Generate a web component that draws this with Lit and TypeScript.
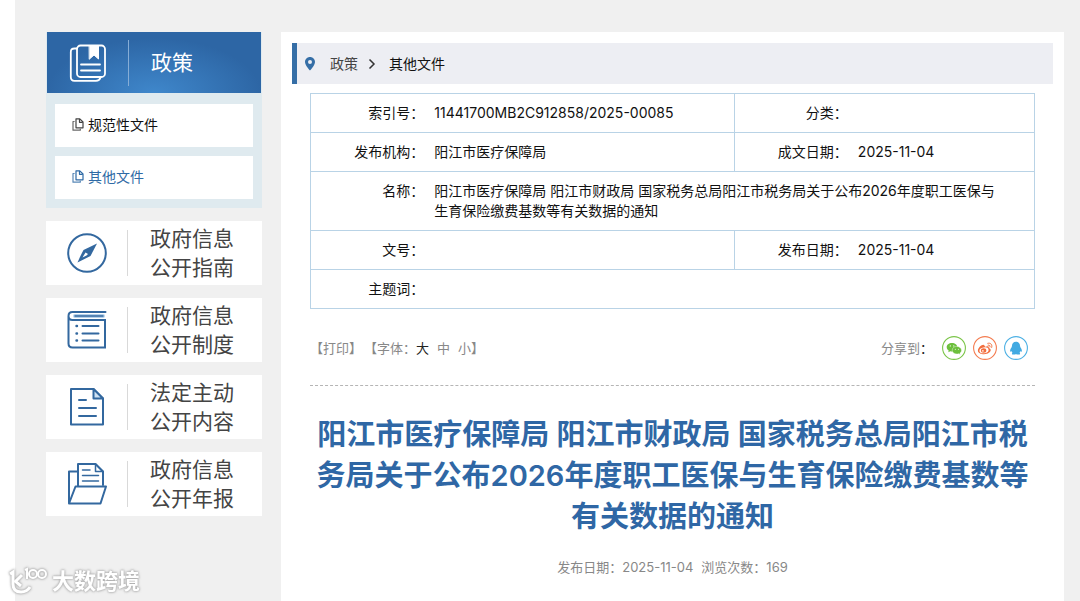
import { LitElement, html, css, svg } from "lit";
import { customElement, state } from "lit/decorators.js";

const policyIcon = svg`
  <svg viewBox="0 0 38 38" width="38" height="38" fill="none" stroke="#fff" stroke-width="1.8" stroke-linecap="round" stroke-linejoin="round" aria-hidden="true">
    <rect x="8" y="1.5" width="28" height="31.5" rx="3.5"/>
    <path d="M8 4.5H5.5Q1.800 4.500 1.800 8V33Q1.800 36.800 5.500 36.800H27Q30.500 36.800 31.500 33.500"/>
    <path d="M20.500 1.500H29.500V15L25 11L20.500 15Z" fill="#fff" stroke-width="1"/>
    <path d="M12 20.500H31M12 26.500H31"/>
  </svg>`;

const compassIcon = svg`
  <svg viewBox="0 0 40 40" width="40" height="40" fill="none" stroke="#33689f" aria-hidden="true">
    <circle cx="20" cy="20" r="18.800" stroke-width="2"/>
    <path d="M30 10.500L16.500 17Q13.500 22.500 10.500 29.500L23.500 23Z" fill="#33689f" stroke="none"/>
    <path d="M18.500 19.500L21 21L19.500 22.500L15.500 24.500Z" fill="#fff" stroke="none"/>
  </svg>`;

const bookIcon = svg`
  <svg viewBox="0 0 40 40" width="40" height="40" fill="none" stroke="#33689f" stroke-width="2" stroke-linecap="round" aria-hidden="true">
    <path d="M38.500 2H5.500Q1.500 2 1.500 6V33.500Q1.500 37.500 5.500 37.500H38V10H5.500Q1.500 10 1.500 6" />
    <path d="M8 6H36" stroke-width="4" stroke="#b5d2ec"/>
    <path d="M8 6H36" stroke-width="1.500"/>
    <path d="M15.500 16H31.500M15.500 23.500H31.500M15.500 30.500H31.500" stroke-width="2"/>
    <path d="M9.500 16H10M9.500 23.500H10M9.500 30.500H10" stroke-width="2.400"/>
  </svg>`;

const sheetIcon = svg`
  <svg viewBox="0 0 40 40" width="40" height="40" fill="none" stroke="#33689f" stroke-width="2" stroke-linejoin="round" stroke-linecap="round" aria-hidden="true">
    <path d="M4 2H26.500L36 11.500V37.500H4Z"/>
    <path d="M26.500 2V11.500H36Z" fill="#cfe2f3"/>
    <path d="M12 13H19M12 21H29M12 29H29"/>
  </svg>`;

const folderIcon = svg`
  <svg viewBox="0 0 40 44" width="40" height="44" fill="none" stroke="#33689f" stroke-width="2" stroke-linejoin="round" stroke-linecap="round" aria-hidden="true">
    <path d="M10.500 9.500H2V40.500"/>
    <path d="M11 24V2H28.500L36 9.500V23"/>
    <path d="M28.500 2V9.500H36Z" stroke-width="1.500"/>
    <path d="M15.500 8H23M15.500 13.500H31.500M15.500 19H31.500" stroke-width="1.500"/>
    <path d="M8.500 24.500H39L33.500 41.500H2Z" fill="#fff"/>
  </svg>`;

const copyIcon = svg`
  <svg class="copy" viewBox="0 0 12 13" width="12" height="13" fill="none" stroke="currentColor" stroke-width="1.200" stroke-linejoin="round" aria-hidden="true">
    <path d="M4 .8H7.800L11 4V9.800H4Z"/>
    <path d="M7.500 1V4.300H10.800"/>
    <path d="M2.600 3.500H1V12.200H8.300V10.800" opacity=".8"/>
  </svg>`;

const pinIcon = svg`
  <svg viewBox="0 0 10 14" width="10" height="14" fill="#356ea6" fill-rule="evenodd" aria-hidden="true">
    <path d="M5 0C2.200 0 0 2.200 0 5C0 8.500 5 13.600 5 13.600S10 8.500 10 5C10 2.200 7.800 0 5 0ZM5 3A2 2 0 1 1 5 7A2 2 0 1 1 5 3Z"/>
  </svg>`;

const chevronIcon = svg`
  <svg viewBox="0 0 8 12" width="8" height="12" fill="none" stroke="#333" stroke-width="1.500" aria-hidden="true">
    <path d="M1.500 1.500L6 6L1.500 10.500"/>
  </svg>`;

const wechatIcon = svg`
  <svg viewBox="0 0 24 24" width="24" height="24" aria-hidden="true">
    <circle cx="12" cy="12" r="11.400" fill="#fff" stroke="#7bc549" stroke-width="1.100"/>
    <path d="M10 7C6.800 7 4.700 8.900 4.700 11.200C4.700 12.600 5.500 13.700 6.700 14.500L6.300 16.200L8.300 15.200Q9.200 15.500 10.200 15.500C13 15.500 15.300 13.700 15.300 11.200C15.300 8.900 13 7 10 7Z" fill="#6cbf3c"/>
    <path d="M14.800 10.400C12 10.400 10.200 12.200 10.200 14.200C10.200 16.400 12.200 18 14.900 18Q15.800 18 16.600 17.700L18.300 18.600L17.900 17.100C19 16.400 19.500 15.400 19.500 14.200C19.500 12.200 17.500 10.400 14.800 10.400Z" fill="#6cbf3c" stroke="#fff" stroke-width=".4"/>
    <g fill="#fff"><circle cx="8.300" cy="9.900" r=".6"/><circle cx="11.800" cy="9.900" r=".6"/><circle cx="13.300" cy="13.200" r=".5"/><circle cx="16.400" cy="13.200" r=".5"/></g>
  </svg>`;

const weiboIcon = svg`
  <svg viewBox="0 0 24 24" width="24" height="24" fill="none" aria-hidden="true">
    <circle cx="12" cy="12" r="11.400" fill="#fff" stroke="#f47c50" stroke-width="1.100"/>
    <path d="M10.700 8.900C9.800 7.800 4.900 11.400 4.900 14.400C4.900 16.900 8 18.200 11 18.200C15 18.200 17.700 16 17.700 14C17.700 12.700 16.700 12.100 15.800 11.900C16.300 10.300 14.800 9.600 12 10.700C12.200 9.900 11.300 9 10.700 8.900Z" fill="#f26d3d"/>
    <ellipse cx="11" cy="14.300" rx="4.600" ry="2.900" transform="rotate(-8 11 14.300)" fill="#fff"/>
    <ellipse cx="10.600" cy="14.500" rx="2.700" ry="2.200" fill="#f26d3d"/>
    <circle cx="9.900" cy="14.900" r=".8" fill="#fff"/>
    <path d="M14.800 7.300C17.800 6.500 19.500 8.700 18.700 11.400M15.100 9.100C16.700 8.800 17.300 9.800 17 11" stroke="#f26d3d" stroke-width="1" stroke-linecap="round"/>
  </svg>`;

const qqIcon = svg`
  <svg viewBox="0 0 24 24" width="24" height="24" aria-hidden="true">
    <circle cx="12" cy="12" r="11.400" fill="#fff" stroke="#4cb0e4" stroke-width="1.100"/>
    <path d="M12 5.700C9.400 5.700 8 7.500 8 9.800C8 10.300 7.700 10.700 7.600 11.200C6.500 12.700 5.900 14.200 6.200 15.500C6.400 16 7 15.500 7.400 14.900C7.600 15.700 8 16.300 8.500 16.700C7.700 17.100 7.500 18.500 9.200 18.600C10.600 18.700 11.600 18.300 12 17.900C12.400 18.300 13.400 18.700 14.800 18.600C16.500 18.500 16.300 17.100 15.500 16.700C16 16.300 16.400 15.700 16.600 14.900C17 15.500 17.600 16 17.800 15.500C18.100 14.200 17.500 12.700 16.400 11.200C16.300 10.700 16 10.300 16 9.800C16 7.500 14.600 5.700 12 5.700Z" fill="#41aae2"/>
  </svg>`;

const sections = [
  { icon: compassIcon, lines: ["政府信息", "公开指南"] },
  { icon: bookIcon, lines: ["政府信息", "公开制度"] },
  { icon: sheetIcon, lines: ["法定主动", "公开内容"] },
  { icon: folderIcon, lines: ["政府信息", "公开年报"] },
];

const title =
  "阳江市医疗保障局 阳江市财政局 国家税务总局阳江市税务局关于公布2026年度职工医保与生育保险缴费基数等有关数据的通知";

@customElement("side-nav")
class SideNav extends LitElement {
  static styles = css`
    :host { display: flex; flex-direction: column; gap: 13px; }
    a { color: inherit; text-decoration: none; }
    .group { background: #dfeaef; padding: 0 1px 9px; }
    .row {
      display: grid;
      grid-template-columns: 82px 1fr;
      align-items: center;
      font-size: 21px;
      line-height: 29px;
    }
    .icon {
      display: flex;
      align-items: center;
      justify-content: center;
      height: 46px;
      border-right: 1px solid #d9d9d9;
    }
    .label { padding-left: 22px; }
    .line { display: block; }
    .head {
      height: 61px;
      color: #fff;
      background: radial-gradient(ellipse 50% 90% at 50% 100%, #3f87cb, #2d66a5);
    }
    .head .icon { border-color: #86add6; }
    .subs {
      list-style: none;
      margin: 0;
      padding: 11px 8px 0;
      display: grid;
      gap: 9px;
    }
    .sub {
      box-sizing: border-box;
      display: flex;
      align-items: center;
      gap: 4px;
      height: 43px;
      padding: 0 0 2px 17px;
      background: #fff;
      color: #111;
      font-size: 14px;
      line-height: 20px;
    }
    .copy { color: #444; }
    .current, .current .copy { color: #2f6aa5; }
    .card { height: 64px; background: #fff; color: #444; }
  `;

  render() {
    return html`
      <div class="group">
        <a class="row head" href="#policy"><span class="icon">${policyIcon}</span><span class="label">政策</span></a>
        <ul class="subs">
          <li><a class="sub" href="#normative">${copyIcon}规范性文件</a></li>
          <li><a class="sub current" href="#other" aria-current="page">${copyIcon}其他文件</a></li>
        </ul>
      </div>
      ${sections.map(
        (s) => html`
          <a class="row card" href="#section">
            <span class="icon">${s.icon}</span>
            <span class="label">${s.lines.map((l) => html`<span class="line">${l}</span>`)}</span>
          </a>`
      )}
    `;
  }
}

@customElement("doc-meta")
class DocMeta extends LitElement {
  static styles = css`
    :host { display: block; }
    table {
      width: 100%;
      border-collapse: collapse;
      table-layout: fixed;
      font-size: 14px;
      line-height: 20px;
      color: #111;
    }
    .c-label { width: 16%; }
    .c-value { width: 42.500%; }
    tr, table { border: 1px solid #b9d3e6; }
    th, td { vertical-align: top; font-weight: 400; }
    th { text-align: right; padding: 9px 2px 9px 0; }
    td { text-align: left; padding: 9px 28px 9px 8px; }
    .split { border-left: 1px solid #b9d3e6; }
  `;

  render() {
    return html`
      <table>
        <colgroup><col class="c-label"><col class="c-value"><col class="c-label"><col></colgroup>
        <tbody>
          <tr><th scope="row">索引号：</th><td>11441700MB2C912858/2025-00085</td><th class="split" scope="row">分类：</th><td></td></tr>
          <tr><th scope="row">发布机构：</th><td>阳江市医疗保障局</td><th class="split" scope="row">成文日期：</th><td>2025-11-04</td></tr>
          <tr><th scope="row">名称：</th><td colspan="3">${title}</td></tr>
          <tr><th scope="row">文号：</th><td></td><th class="split" scope="row">发布日期：</th><td>2025-11-04</td></tr>
          <tr><th scope="row">主题词：</th><td colspan="3"></td></tr>
        </tbody>
      </table>
    `;
  }
}

@customElement("app-root")
class AppRoot extends LitElement {
  static styles = css`
    :host {
      display: block;
      position: relative;
      box-sizing: border-box;
      min-height: 100vh;
      padding-left: 15px;
      background: #fff;
      font-family: Inter, "Noto Sans CJK SC", sans-serif;
      overflow: hidden;
    }
    a { color: inherit; text-decoration: none; }
    button { font: inherit; color: inherit; background: none; border: 0; padding: 0; cursor: pointer; }
    .page {
      box-sizing: border-box;
      min-height: 100vh;
      display: grid;
      grid-template-columns: 216px minmax(0, 1fr);
      gap: 19px;
      padding: 32px 16px 0 31px;
      background: #f0f0f0;
    }
    main { background: #fff; padding: 11px 11px 0; }
    .crumbs {
      display: flex;
      align-items: center;
      height: 41px;
      padding-left: 8px;
      border-left: 5px solid #356ea6;
      background: #edeef3;
      font-size: 14px;
      line-height: 20px;
      color: #444;
    }
    .crumbs .up { margin: 0 10px 0 15px; }
    .crumbs .here { margin-left: 13px; color: #111; }
    .body { padding: 9px 18px 16px; }
    .tools {
      display: flex;
      align-items: center;
      justify-content: space-between;
      margin-top: 27px;
      padding-bottom: 25px;
      border-bottom: 1px dashed #b5b5b5;
      font-size: 13px;
      line-height: 20px;
      color: #888;
    }
    .set, .share { display: flex; align-items: center; }
    .print { margin-right: 2px; }
    .sizes { display: flex; gap: 8px; }
    .sizes .on { color: #222; }
    .share { gap: 7px; padding-right: 7px; }
    .share .to { margin-right: 2px; }
    .share a { display: flex; }
    .colon { color: #222; }
    h1 {
      margin: 28px 0 0;
      font-size: 29px;
      line-height: 41px;
      font-weight: 600;
      text-align: center;
      color: #2f67a5;
    }
    .info {
      margin: 21px 0 0;
      display: flex;
      justify-content: center;
      gap: 8px;
      font-size: 13px;
      line-height: 18px;
      color: #888;
    }
    .mark {
      position: absolute;
      left: 8px;
      bottom: 6px;
      display: flex;
      align-items: center;
      gap: 4px;
      color: #fff;
      font-size: 22px;
      line-height: 28px;
      font-weight: 700;
      filter: drop-shadow(0 0 1px #aaa) drop-shadow(0 0 1px #bbb);
      pointer-events: none;
    }
  `;

  @state() private size = "大";

  render() {
    return html`
      <div class="page">
        <side-nav></side-nav>
        <main>
          <nav class="crumbs" aria-label="政策">
            ${pinIcon}
            <a class="up" href="#policy">政策</a>
            ${chevronIcon}
            <a class="here" href="#other">其他文件</a>
          </nav>
          <div class="body">
            <doc-meta></doc-meta>
            <div class="tools">
              <div class="set">
                <button class="print" type="button" @click=${() => window.print()}>【打印】</button>
                <span>【字体：</span>
                <span class="sizes">
                  ${["大", "中", "小"].map(
                    (s) => html`<button type="button" class=${s === this.size ? "on" : ""} @click=${() => (this.size = s)}>${s}</button>`
                  )}
                </span>
                <span>】</span>
              </div>
              <div class="share">
                <span class="to">分享到<span class="colon">：</span></span>
                <a href="#wechat">${wechatIcon}</a>
                <a href="#weibo">${weiboIcon}</a>
                <a href="#qq">${qqIcon}</a>
              </div>
            </div>
            <h1>${title}</h1>
            <p class="info"><span>发布日期：2025-11-04</span><span>浏览次数：169</span></p>
          </div>
        </main>
      </div>
      <div class="mark">
        <svg viewBox="0 0 40 28" width="40" height="28" fill="none" stroke="#fff" stroke-width="3" aria-hidden="true">
          <path d="M2 7L5 5V17Q5 25 13 25Q19 25 22 20"/>
          <path d="M14 8L7.500 14.500L13 19"/>
          <path d="M17 3L19 2V12" stroke-width="2"/>
          <circle cx="25" cy="7" r="4" stroke-width="2"/>
          <circle cx="34" cy="7" r="4" stroke-width="2"/>
        </svg>
        <span>大数跨境</span>
      </div>
    `;
  }
}
